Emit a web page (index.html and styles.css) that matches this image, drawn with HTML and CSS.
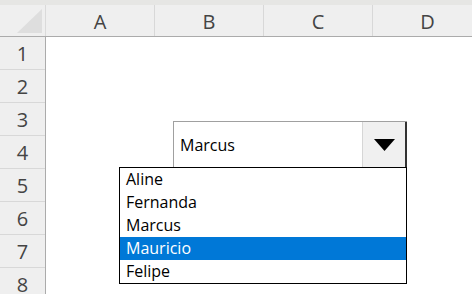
FILE: index.html
```html
<!DOCTYPE html>
<html lang="pt">
<head>
    <meta charset="UTF-8">
    <title>Planilha</title>
    <link rel="stylesheet" href="styles.css">
</head>
<body>
    <div class="topbar"></div>
    <div class="sheet">
        <div class="col-head">
            <div class="corner"><span class="corner-tri"></span></div>
            <div class="col col-a">A</div>
            <div class="col col-b">B</div>
            <div class="col col-c">C</div>
            <div class="col col-d">D</div>
        </div>
        <div class="body">
            <ul class="row-head">
                <li>1</li>
                <li>2</li>
                <li>3</li>
                <li>4</li>
                <li>5</li>
                <li>6</li>
                <li>7</li>
                <li>8</li>
            </ul>
            <div class="cells"></div>
        </div>

        <!-- caixa de combinação sobre as células -->
        <div class="combo">
            <span class="combo-value">Marcus</span>
            <a href="javascript:;" class="combo-btn">
                <svg width="21" height="12" viewBox="0 0 21 12"><polygon points="0,0 21,0 10.5,12" fill="#000"/></svg>
            </a>
        </div>
        <ul class="combo-list">
            <li>Aline</li>
            <li>Fernanda</li>
            <li>Marcus</li>
            <li class="selected">Mauricio</li>
            <li>Felipe</li>
        </ul>
    </div>
</body>
</html>
```

FILE: styles.css
```css
*{
    margin: 0;
    padding: 0;
    box-sizing: border-box;
}
ul{
    list-style: none;
}
body{
    width: 472px;
    height: 294px;
    overflow: hidden;
    background-color: #fff;
    font-family: "Open Sans", "Noto Sans", sans-serif;
}
.topbar{
    height: 5px;
    background-color: #e6e6e4;
}
.sheet{
    position: relative;
}
/* cabeçalho das colunas */
.col-head{
    display: flex;
    height: 32px;
    background-color: #efefef;
    border-bottom: 1px solid #ababab;
}
.corner{
    width: 46px;
    flex: none;
    border-right: 1px solid #dadada;
    position: relative;
}
.corner-tri{
    position: absolute;
    left: 17px;
    top: 4px;
    width: 0;
    height: 0;
    border-left: 25px solid transparent;
    border-bottom: 24px solid #dedede;
}
.col{
    flex: none;
    width: 109px;
    border-right: 1px solid #d8d8d8;
    display: flex;
    align-items: center;
    justify-content: center;
    font-size: 20px;
    color: #444;
    padding-top: 1px;
}
.col-a{
    width: 109px;
}
.col-d{
    width: 110px;
}
/* linhas */
.body{
    display: flex;
}
.row-head{
    width: 46px;
    flex: none;
    background-color: #efefef;
    border-right: 1px solid #ababab;
}
.row-head li{
    height: 33px;
    border-bottom: 1px solid #d8d8d8;
    display: flex;
    align-items: center;
    justify-content: center;
    font-size: 20px;
    color: #444;
    padding-top: 1px;
}
.cells{
    flex: 1;
    background-color: #fff;
}
/* caixa de combinação */
.combo{
    position: absolute;
    left: 173px;
    top: 116px;
    width: 234px;
    height: 46px;
    background-color: #fff;
    border-top: 1px solid #a0a0a0;
    border-left: 1px solid #a0a0a0;
    display: flex;
    align-items: center;
}
.combo-value{
    flex: 1;
    padding-left: 6px;
    font-size: 16px;
    color: #000;
}
.combo-btn{
    width: 45px;
    height: 45px;
    background-color: #f0f0f0;
    border-left: 1px solid #d6d6d6;
    border-right: 2px solid #333;
    display: flex;
    align-items: center;
    justify-content: center;
}
.combo-list{
    position: absolute;
    left: 119px;
    top: 162px;
    width: 288px;
    height: 117px;
    background-color: #fff;
    border: 1px solid #000;
}
.combo-list li{
    height: 23px;
    line-height: 23px;
    padding-left: 6px;
    font-size: 16px;
    color: #000;
}
.combo-list .selected{
    background-color: #0078d7;
    color: #fff;
}
```
